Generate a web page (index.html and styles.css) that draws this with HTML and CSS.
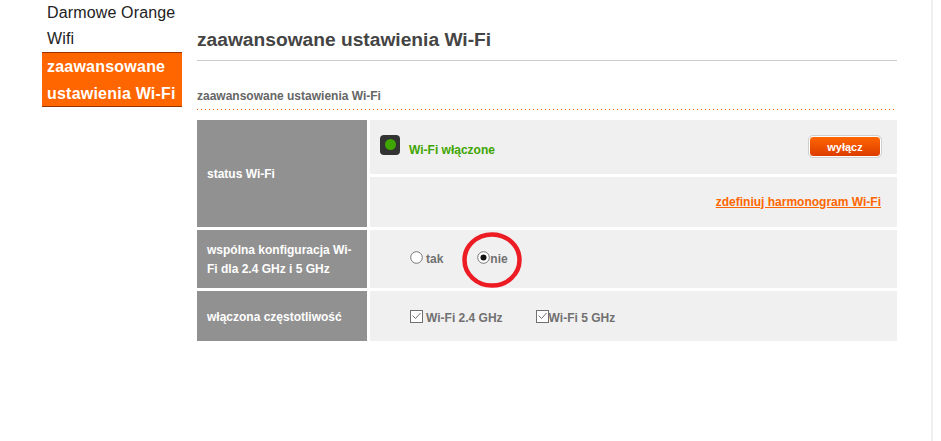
FILE: index.html
```html
<!DOCTYPE html>
<html lang="pl">
<head>
<meta charset="utf-8">
<title>zaawansowane ustawienia Wi-Fi</title>
<link rel="stylesheet" href="styles.css">
</head>
<body>
<div class="page">
  <nav class="side">
    <a class="side-link">Darmowe Orange Wifi</a>
    <a class="side-active">zaawansowane ustawienia Wi-Fi</a>
  </nav>
  <main class="main">
    <h1 class="title">zaawansowane ustawienia Wi-Fi</h1>
    <h2 class="subtitle">zaawansowane ustawienia Wi-Fi</h2>
    <div class="settings">
      <div class="label label-status">status Wi-Fi</div>
      <div class="cell cell-status">
        <div class="status">
          <span class="led"><span class="led-dot"></span></span>
          <span class="status-text">Wi-Fi włączone</span>
        </div>
        <button class="btn">wyłącz</button>
      </div>
      <div class="cell cell-link"><a class="link">zdefiniuj harmonogram Wi-Fi</a></div>

      <div class="label">wspólna konfiguracja Wi-Fi dla 2.4 GHz i 5 GHz</div>
      <div class="cell cell-options">
        <label class="opt opt-tak"><svg class="mark" width="13" height="13" viewBox="0 0 13 13"><circle cx="6.5" cy="6.5" r="5.8" fill="#fff" stroke="#767676" stroke-width="1"/></svg>tak</label>
        <label class="opt opt-nie"><svg class="mark" width="13" height="13" viewBox="0 0 13 13"><circle cx="6.5" cy="6.5" r="5.8" fill="#fff" stroke="#767676" stroke-width="1"/><circle cx="6.5" cy="6.5" r="3" fill="#111"/></svg>nie
          <svg class="ring" width="60" height="56" viewBox="0 0 60 56"><ellipse cx="30" cy="28" rx="27.5" ry="25.5" fill="none" stroke="#ed1c24" stroke-width="4.5"/></svg>
        </label>
      </div>

      <div class="label">włączona częstotliwość</div>
      <div class="cell cell-options cell-freq">
        <label class="opt opt-24"><svg class="mark" width="13" height="13" viewBox="0 0 13 13"><rect x=".5" y=".5" width="12" height="12" fill="#fff" stroke="#707070"/><path d="M2.5 5.5l3 3 5-5.5" fill="none" stroke="#707070" stroke-width="1"/></svg>Wi-Fi 2.4 GHz</label>
        <label class="opt"><svg class="mark" width="13" height="13" viewBox="0 0 13 13"><rect x=".5" y=".5" width="12" height="12" fill="#fff" stroke="#707070"/><path d="M2.5 5.5l3 3 5-5.5" fill="none" stroke="#707070" stroke-width="1"/></svg>Wi-Fi 5 GHz</label>
      </div>
    </div>
  </main>
</div>
</body>
</html>
```
FILE: styles.css
```css
* { box-sizing: border-box; }
html, body { margin: 0; padding: 0; background: #fff; }
body { font-family: "Liberation Sans", Arial, sans-serif; }

.page {
  width: 933px;
  height: 441px;
  overflow: hidden;
  border-right: 2px solid #efefef;
  padding-left: 42px;
  display: flex;
  gap: 15px;
}

.side { width: 140px; flex: none; }
.side-link {
  display: block;
  padding: 0 5px;
  font-size: 16px;
  line-height: 26px;
  height: 52px;
  color: #222;
  letter-spacing: .15px;
}
.side-active {
  display: block;
  padding: 0 4px 0 5px;
  height: 55px;
  background: #ff6600;
  border-top: 1px solid #993300;
  border-bottom: 1px solid #993300;
  color: #fff;
  font-size: 16px;
  font-weight: bold;
  line-height: 27px;
  letter-spacing: .22px;
}

.main { width: 700px; flex: none; }
.title {
  margin: 0;
  height: 61px;
  padding-top: 29px;
  border-bottom: 1px solid #cccccc;
  font-size: 19.2px;
  line-height: 22px;
  font-weight: bold;
  color: #444;
}
.subtitle {
  margin: 0 0 10px;
  height: 49px;
  padding-top: 28px;
  font-size: 12px;
  line-height: 15px;
  font-weight: bold;
  color: #666;
  background: repeating-linear-gradient(90deg, #ff6600 0 1px, transparent 1px 4px) left bottom / 100% 1px no-repeat;
}

.settings {
  display: grid;
  grid-template-columns: 170px 527px;
  grid-template-rows: 54px 50px 58px 50px;
  gap: 3px;
}
.label {
  display: flex;
  align-items: center;
  padding: 2px 10px 0;
  background: #919191;
  color: #fff;
  font-size: 12px;
  line-height: 19px;
  font-weight: bold;
}
.label-status { grid-row: span 2; }

.cell { background: #f0f0f0; display: flex; align-items: center; }
.cell-status { justify-content: space-between; padding: 0 16px 0 10px; }
.status { display: flex; align-items: center; }
.led {
  width: 20px;
  height: 20px;
  margin: 0 9px 5px 0;
  border-radius: 4px;
  background: #333;
  display: flex;
  align-items: center;
  justify-content: center;
}
.led-dot { width: 11px; height: 11px; border-radius: 50%; background: #3fa500; }
.status-text { color: #3fa500; font-size: 12px; font-weight: bold; margin-top: 5px; }

.btn {
  width: 72px;
  height: 21px;
  padding: 0;
  margin-bottom: 1px;
  border: 1px solid #fff;
  outline: 1px solid #cfcfcf;
  border-radius: 4px;
  background: linear-gradient(#ff6600, #dd3c00);
  color: #fff;
  font-family: inherit;
  font-size: 11px;
  font-weight: bold;
}

.cell-link { justify-content: flex-end; padding: 0 16px 1px 0; }
.link {
  color: #ff6600;
  font-size: 12px;
  font-weight: bold;
  text-decoration: underline;
}

.cell-options { padding-left: 40px; gap: 34px; }
.cell-freq { gap: 33px; padding-top: 3px; }
.opt {
  position: relative;
  display: flex;
  align-items: center;
  color: #707070;
  font-size: 12px;
  font-weight: bold;
}
.mark { flex: none; margin-bottom: 3px; }
.opt-tak .mark { margin-right: 3px; }
.opt-24 .mark { margin-right: 3px; }
.ring { position: absolute; left: -15px; top: -19px; }
```
